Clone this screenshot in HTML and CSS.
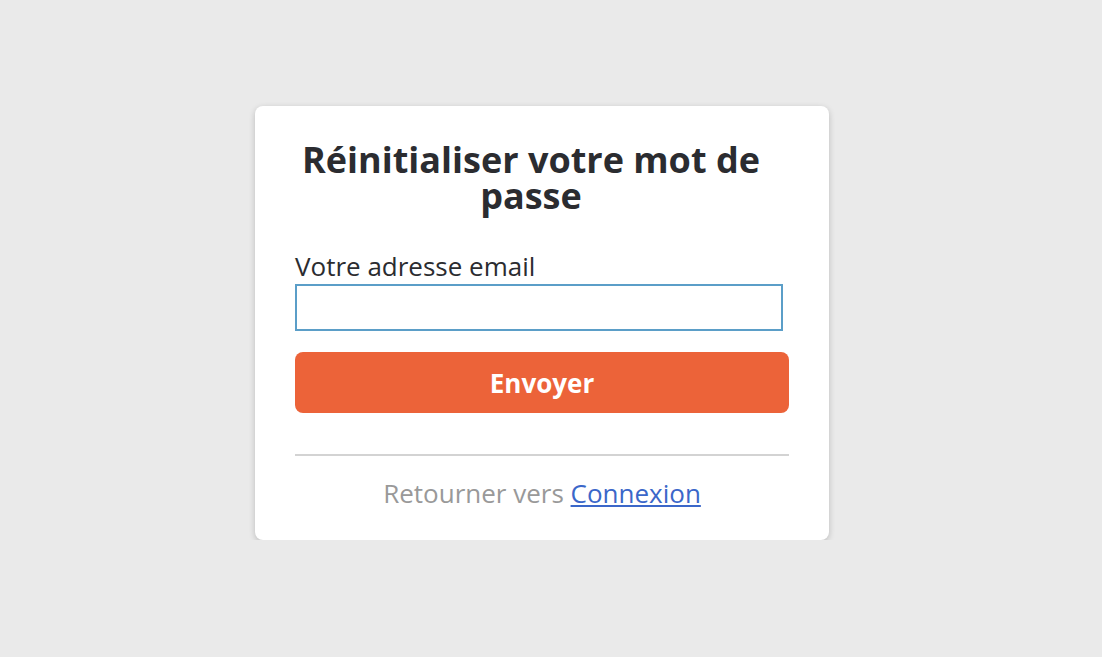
FILE: index.html
```html
<!DOCTYPE html>
<html lang="fr">
<head>
  <meta charset="UTF-8" />
  <meta name="viewport" content="width=device-width, initial-scale=1.0"/>
  <title>Réinitialiser votre mot de passe</title>
  <link rel="stylesheet" href="styles.css">
</head>
<body>

  <div class="page">
    <div class="card">
      <h1 class="title">Réinitialiser votre mot de passe</h1>

      <form class="reset-form" onsubmit="return false;">
        <label for="email">Votre adresse email</label>
        <input id="email" type="email">
        <button type="submit">Envoyer</button>
      </form>

      <hr class="divider">

      <p class="back">Retourner vers <a href="#">Connexion</a></p>
    </div>
  </div>

</body>
</html>
```

FILE: styles.css
```css
body {
  margin: 0;
  font-family: "Open Sans", Arial, sans-serif;
  background-color: #eaeaea;
  color: #2b2c30;
}

.page {
  display: flex;
  justify-content: center;
  padding: 106px 18px 0 0;
}

.card {
  width: 494px;
  padding: 36px 40px 32px;
  background: #fff;
  border-radius: 8px;
  box-shadow: 0 2px 6px rgba(0, 0, 0, 0.2);
}

.title {
  margin: 0 22px 0 0;
  font-size: 36px;
  line-height: 36px;
  font-weight: 700;
  text-align: center;
}

.reset-form {
  display: flex;
  flex-direction: column;
  margin-top: 37px;
}

label {
  font-size: 26px;
  line-height: 30px;
}

input {
  width: 488px;
  height: 47px;
  box-sizing: border-box;
  margin-top: 3px;
  border: 2px solid #5b9ec8;
  font-size: 20px;
  padding: 0 10px;
  outline: none;
}

button {
  margin-top: 21px;
  height: 61px;
  border: none;
  border-radius: 8px;
  background-color: #ec6339;
  color: #fff;
  font-family: inherit;
  font-size: 26px;
  font-weight: 700;
  cursor: pointer;
}

.divider {
  margin: 41px 0 0;
  border: none;
  border-top: 2px solid #d3d3d3;
}

.back {
  margin: 22px 0 0;
  text-align: center;
  font-size: 26px;
  line-height: 30px;
  color: #999;
}

.back a {
  color: #3b67c9;
}
```
